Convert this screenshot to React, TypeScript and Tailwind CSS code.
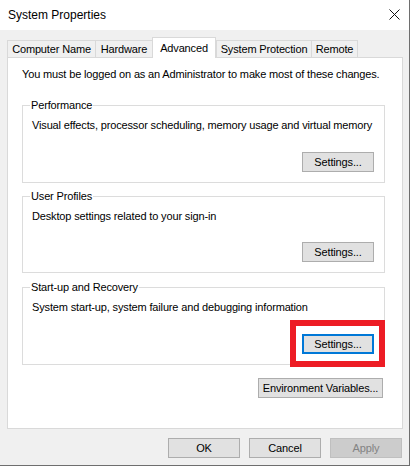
import React from "react";

const font = { fontFamily: '"Liberation Sans", Arial, sans-serif' };

function Btn({ label, w = "w-[72px]", focused = false, disabled = false }: { label: string; w?: string; focused?: boolean; disabled?: boolean }) {
  return (
    <button
      className={`${w} h-[20px] text-[11px] tracking-[-0.15px] leading-none whitespace-nowrap flex items-center justify-center ${
        disabled
          ? "bg-[#cccccc] border border-[#bfbfbf] text-[#838383]"
          : focused
          ? "bg-[#e1e1e1] border-2 border-[#0078d7] text-black"
          : "bg-[#e1e1e1] border border-[#adadad] text-black"
      }`}
    >
      {label}
    </button>
  );
}

function Group({ title, text, focused = false, h = "h-[85px]", mt }: { title: string; text: string; focused?: boolean; h?: string; mt: string }) {
  return (
    <fieldset className={`${mt} ${h} w-[363px] min-w-0 border border-[#dcdcdc] pl-[8px] pr-[10px] flex flex-col`}>
      <legend className="px-[1px] text-[11px] tracking-[-0.15px] leading-[14px] ml-[-1px] whitespace-nowrap">{title}</legend>
      <p className="mt-[5px] text-[11px] tracking-[-0.15px] leading-[16px] pl-[1px] whitespace-nowrap">{text}</p>
      <div className="mt-auto mb-[10px] flex justify-end">
        <Btn label="Settings..." focused={focused} />
      </div>
    </fieldset>
  );
}

export default function App() {
  const tabs = [
    { label: "Computer Name", w: "w-[88px]" },
    { label: "Hardware", w: "w-[57px]" },
    { label: "Advanced", w: "w-[64px]", active: true },
    { label: "System Protection", w: "w-[95px]" },
    { label: "Remote", w: "w-[47px]" },
  ];

  return (
    <div style={font} className="relative w-[410px] h-[466px] bg-[#f0f0f0] border-r border-b border-[#6e6e6e] text-black">
      {/* Title bar */}
      <div className="h-[30px] bg-white flex items-center justify-between pl-[8px] pr-[9px]">
        <span className="text-[12px]">System Properties</span>
        <svg width="11" height="11" viewBox="0 0 11 11" className="mt-[-1px]">
          <path d="M0.5 0.5 L10.5 10.5 M10.5 0.5 L0.5 10.5" stroke="#111" strokeWidth="1" />
        </svg>
      </div>

      {/* Tabs */}
      <div className="pt-[7px] px-[7px]">
        <div className="flex items-end h-[20px] relative z-10">
          {tabs.map((t) =>
            t.active ? (
              <div key={t.label} className={`${t.w} h-[21px] mb-[-1px] bg-white border border-b-0 border-[#d9d9d9] flex items-start justify-center pt-[2px] text-[11px] tracking-[-0.15px] whitespace-nowrap`}>
                {t.label}
              </div>
            ) : (
              <div key={t.label} className={`${t.w} h-[17px] bg-[#f0f0f0] border border-b-0 border-r-0 last:border-r border-[#d9d9d9] flex items-center justify-center text-[11px] tracking-[-0.15px] whitespace-nowrap`}>
                {t.label}
              </div>
            )
          )}
        </div>

        {/* Panel */}
        <div className="w-[396px] h-[372px] bg-white border border-[#d9d9d9] pl-[14px] pt-[8px]">
          <p className="text-[11px] tracking-[-0.15px] leading-[16px] whitespace-nowrap">You must be logged on as an Administrator to make most of these changes.</p>
          <Group mt="mt-[16px]" title="Performance" text="Visual effects, processor scheduling, memory usage and virtual memory" />
          <Group mt="mt-[6px]" h="h-[84px]" title="User Profiles" text="Desktop settings related to your sign-in" />
          <Group mt="mt-[7px]" title="Start-up and Recovery" text="System start-up, system failure and debugging information" focused />
          <div className="mt-[13px] w-[361px] flex justify-end">
            <Btn label="Environment Variables..." w="w-[125px]" />
          </div>
        </div>
      </div>

      {/* Dialog buttons */}
      <div className="mt-[9px] pr-[7px] flex justify-end gap-[9px]">
        <Btn label="OK" />
        <Btn label="Cancel" />
        <Btn label="Apply" disabled />
      </div>

      {/* Red highlight annotation */}
      <div className="absolute left-[290px] top-[320px] w-[95px] h-[47px] border-[6px] border-[#ed1c24] pointer-events-none" />
    </div>
  );
}
